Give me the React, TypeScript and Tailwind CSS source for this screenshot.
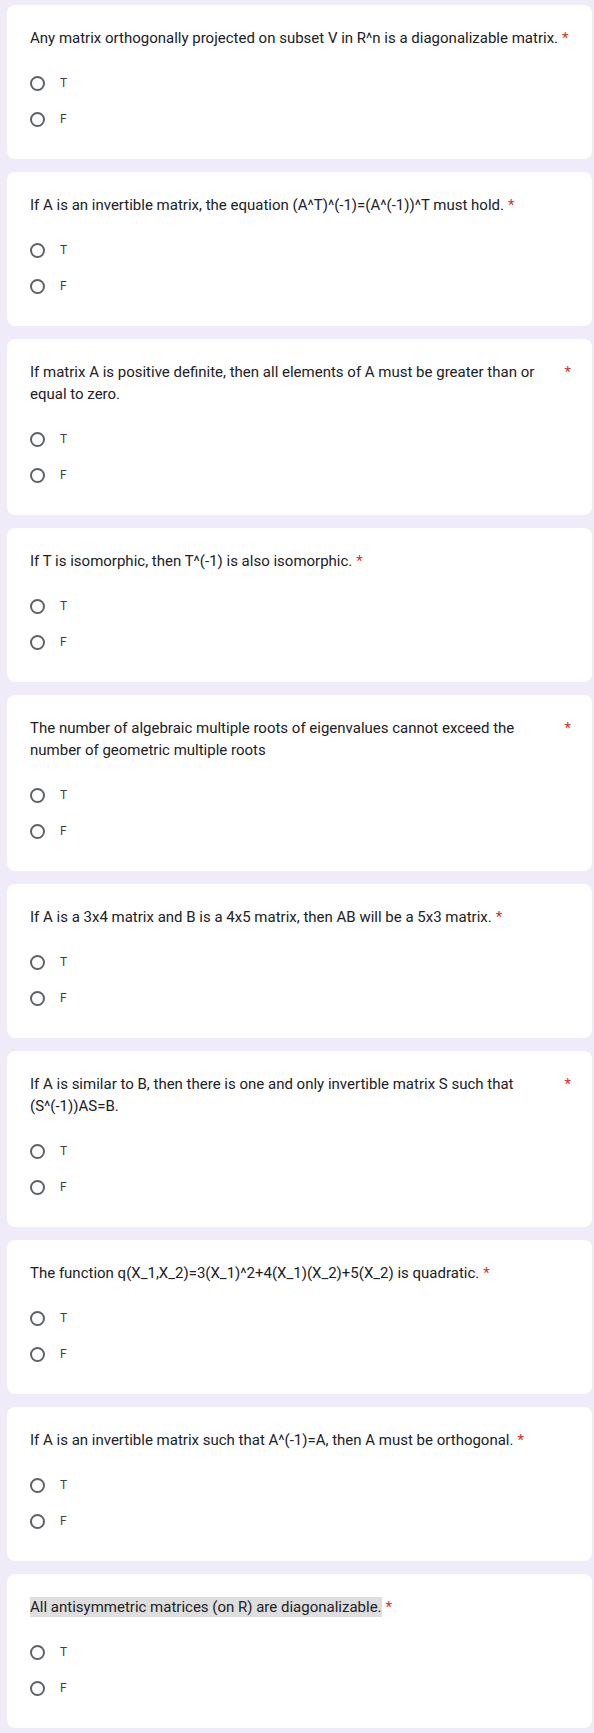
const questions = [
  { title: "Any matrix orthogonally projected on subset V in R^n is a diagonalizable matrix." },
  { title: "If A is an invertible matrix, the equation (A^T)^(-1)=(A^(-1))^T must hold." },
  { title: "If matrix A is positive definite, then all elements of A must be greater than or equal to zero." },
  { title: "If T is isomorphic, then T^(-1) is also isomorphic." },
  { title: "The number of algebraic multiple roots of eigenvalues cannot exceed the number of geometric multiple roots" },
  { title: "If A is a 3x4 matrix and B is a 4x5 matrix, then AB will be a 5x3 matrix." },
  { title: "If A is similar to B, then there is one and only invertible matrix S such that (S^(-1))AS=B." },
  { title: "The function q(X_1,X_2)=3(X_1)^2+4(X_1)(X_2)+5(X_2) is quadratic." },
  { title: "If A is an invertible matrix such that A^(-1)=A, then A must be orthogonal." },
  { title: "All antisymmetric matrices (on R) are diagonalizable.", selected: true },
];

function Option({ label }: { label: string }) {
  return (
    <label className="flex h-[36px] items-center gap-[15px]">
      <span className="h-[15px] w-[15px] shrink-0 rounded-full border-2 border-[#5f6368]" />
      <span className="text-[12px] text-[#3c4043]">{label}</span>
    </label>
  );
}

function QuestionCard({ title, selected }: { title: string; selected?: boolean }) {
  return (
    <div className="rounded-[8px] bg-white pb-[22px] pl-[23px] pr-[21px] pt-[22px]">
      <div className="mb-[16px] flex text-[15px] leading-[22px] text-[#202124]">
        <span>
          {selected ? <span className="bg-[#dedede] py-px">{title}</span> : title}
        </span>
        <span className="shrink-0 pl-[4px] text-[#d93025]">*</span>
      </div>
      <div className="flex flex-col">
        <Option label="T" />
        <Option label="F" />
      </div>
    </div>
  );
}

export default function App() {
  return (
    <div
      className="min-h-[1733px] bg-[#f0ebf8] pb-[4px] pl-[7px] pr-[2px] pt-[5px]"
      style={{ fontFamily: "Roboto, 'Noto Sans', sans-serif" }}
    >
      <div className="flex flex-col gap-[13px]">
        {questions.map((q, i) => (
          <QuestionCard key={i} title={q.title} selected={q.selected} />
        ))}
      </div>
    </div>
  );
}
